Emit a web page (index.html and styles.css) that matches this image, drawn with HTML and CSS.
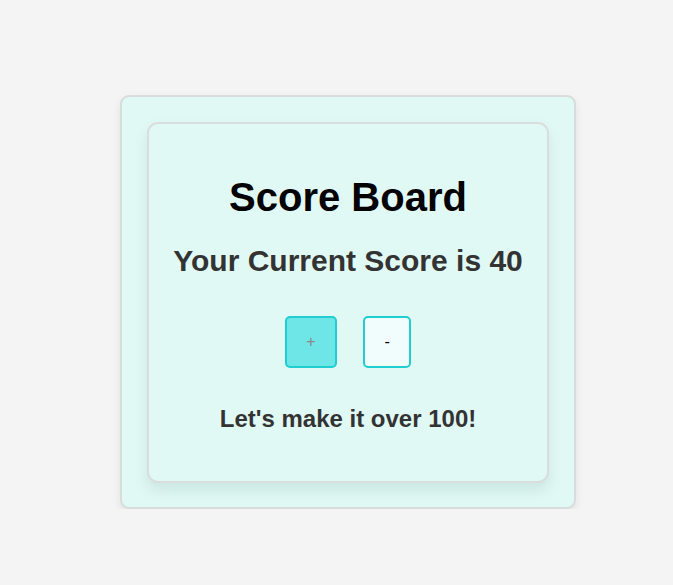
FILE: index.html
```html
<!DOCTYPE html>
<html>
<head>
<meta charset="utf-8">
<link rel="stylesheet" href="styles.css">
</head>
<body>
<div class="page">
  <div class="outer">
    <div class="card">
      <h1 class="title">Score Board</h1>
      <h2 class="score">Your Current Score is 40</h2>
      <div class="buttons">
        <button class="btn btn-plus">+</button>
        <button class="btn btn-minus">-</button>
      </div>
      <p class="note">Let's make it over 100!</p>
    </div>
  </div>
</div>
</body>
</html>
```
FILE: styles.css
```css
html, body {
  margin: 0;
  padding: 0;
  background: #f4f4f4;
  font-family: "Liberation Sans", Arial, sans-serif;
}
.page {
  padding: 95px 0 0 120px;
}
.outer {
  width: 402px;
  padding: 25px 25px 24px;
  background: #e1f9f5;
  border: 2px solid #d8dcdb;
  border-radius: 9px;
  box-shadow: 0 4px 8px rgba(0, 0, 0, 0.08);
}
.card {
  box-sizing: border-box;
  width: 402px;
  height: 361px;
  padding-top: 51px;
  background: #e1f9f5;
  border: 2px solid #d9dddc;
  border-radius: 11px;
  box-shadow: 0 8px 14px rgba(60, 110, 105, 0.13);
  text-align: center;
}
.title {
  margin: 0;
  font-size: 40px;
  line-height: 44px;
  font-weight: bold;
  color: #000;
}
.score {
  margin: 25px 0 0;
  font-size: 30px;
  line-height: 34px;
  font-weight: bold;
  color: #333;
}
.buttons {
  margin-top: 38px;
  display: flex;
  justify-content: center;
  gap: 26px;
}
.btn {
  font-family: "Liberation Sans", Arial, sans-serif;
  font-size: 16px;
  line-height: 18px;
  padding: 15px 19.5px;
  border: 2px solid #20cdd0;
  border-radius: 5px;
  margin: 0;
}
.btn-plus {
  background: #6ee5e7;
  color: #8a8a8a;
}
.btn-minus {
  background: #f1fdfc;
  color: #000;
}
.note {
  margin: 37px 0 0;
  font-size: 24px;
  line-height: 28px;
  font-weight: bold;
  color: #333;
}
```
